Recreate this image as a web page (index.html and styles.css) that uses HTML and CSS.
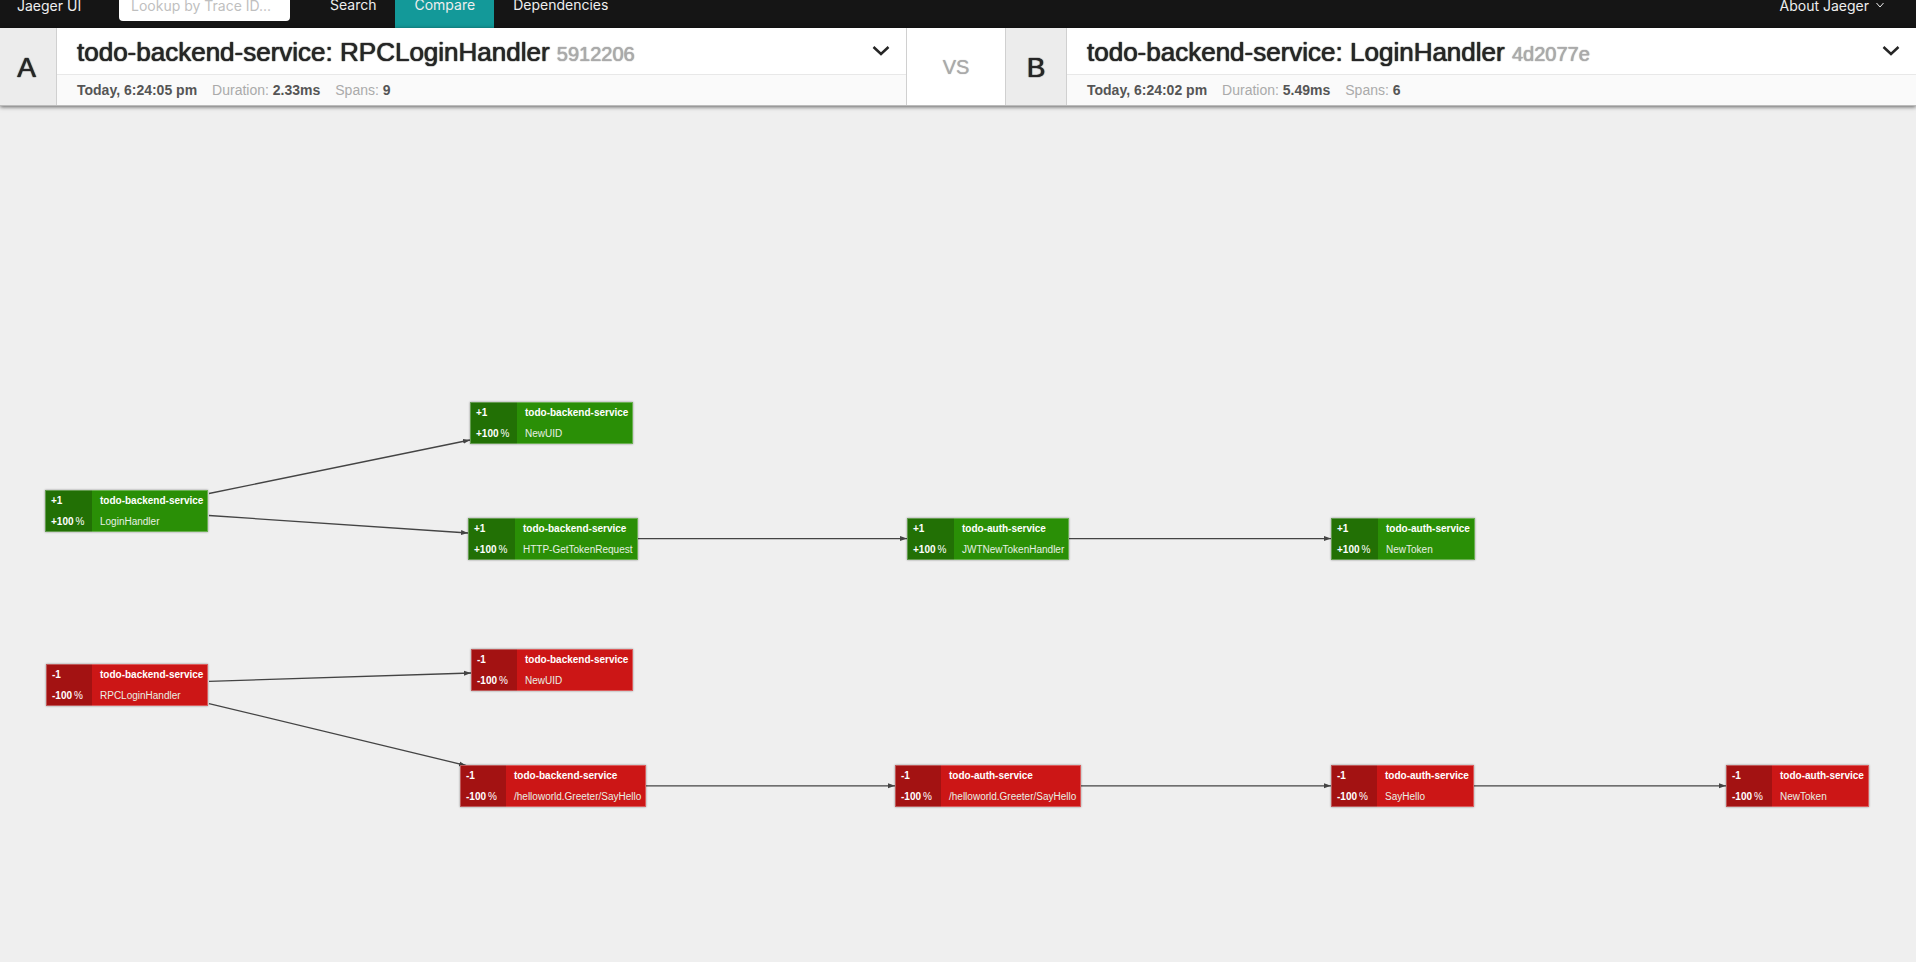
FILE: index.html
```html
<!DOCTYPE html>
<html lang="en">
<head>
<meta charset="utf-8">
<title>Jaeger UI</title>
<link rel="stylesheet" href="styles.css">
</head>
<body>
<nav class="nav">
  <div class="nav-inner">
    <a class="nav-brand" href="#">Jaeger UI</a>
    <input class="nav-lookup" type="text" placeholder="Lookup by Trace ID..." aria-label="Lookup by Trace ID">
    <a class="nav-item" href="#">Search</a>
    <a class="nav-item nav-item-active" href="#">Compare</a>
    <a class="nav-item" href="#">Dependencies</a>
    <button class="nav-about" type="button">About Jaeger
      <svg width="10" height="8" viewBox="0 0 10 8"><path d="M1.5 2L5 6L8.500 2" fill="none" stroke="currentColor"/></svg>
    </button>
  </div>
</nav>
<header class="header">
  <div class="label label-a">A</div>
  <section class="trace">
    <div class="trace-head">
      <h1 class="trace-title">todo-backend-service: RPCLoginHandler <small class="trace-id">5912206</small></h1>
      <button class="toggle" type="button" aria-label="Choose trace A"><svg width="18" height="12" viewBox="0 0 18 12"><path d="M1.500 2L9 9L16.500 2" fill="none" stroke="currentColor" stroke-width="2.500"/></svg></button>
    </div>
    <div class="trace-meta"><b>Today, 6:24:05 pm</b><span>Duration: <b>2.33ms</b></span><span>Spans: <b>9</b></span></div>
  </section>
  <div class="vs">VS</div>
  <div class="label">B</div>
  <section class="trace">
    <div class="trace-head">
      <h1 class="trace-title">todo-backend-service: LoginHandler <small class="trace-id">4d2077e</small></h1>
      <button class="toggle" type="button" aria-label="Choose trace B"><svg width="18" height="12" viewBox="0 0 18 12"><path d="M1.500 2L9 9L16.500 2" fill="none" stroke="currentColor" stroke-width="2.500"/></svg></button>
    </div>
    <div class="trace-meta"><b>Today, 6:24:02 pm</b><span>Duration: <b>5.49ms</b></span><span>Spans: <b>6</b></span></div>
  </section>
</header>
<main class="graph">
  <svg class="edges" width="1916" height="856" viewBox="0 0 1916 856">
    <defs><marker id="arrow" markerUnits="userSpaceOnUse" markerWidth="8" markerHeight="6" refX="7" refY="3" orient="auto"><path d="M0 0.500L7 3L0 5.500Z" fill="#444"/></marker></defs>
    <g fill="none" stroke="#444" stroke-width="1.300">
      <path d="M209 387.500L470 334" marker-end="url(#arrow)"/>
      <path d="M209 409.500L468 427" marker-end="url(#arrow)"/>
      <path d="M636 432.600H907" marker-end="url(#arrow)"/>
      <path d="M1068 432.600H1331" marker-end="url(#arrow)"/>
      <path d="M209 575.300L471 567" marker-end="url(#arrow)"/>
      <path d="M209 597.600L466 659.500" marker-end="url(#arrow)"/>
      <path d="M645 679.800H895" marker-end="url(#arrow)"/>
      <path d="M1080 679.800H1331" marker-end="url(#arrow)"/>
      <path d="M1474 679.800H1726" marker-end="url(#arrow)"/>
    </g>
  </svg>
  <div class="node added n1"><div class="metric"><b>+1</b><b>+100<i>%</i></b></div><div class="op"><b>todo-backend-service</b><span>LoginHandler</span></div></div>
  <div class="node added n2"><div class="metric"><b>+1</b><b>+100<i>%</i></b></div><div class="op"><b>todo-backend-service</b><span>NewUID</span></div></div>
  <div class="node added n3"><div class="metric"><b>+1</b><b>+100<i>%</i></b></div><div class="op"><b>todo-backend-service</b><span>HTTP-GetTokenRequest</span></div></div>
  <div class="node added n4"><div class="metric"><b>+1</b><b>+100<i>%</i></b></div><div class="op"><b>todo-auth-service</b><span>JWTNewTokenHandler</span></div></div>
  <div class="node added n5"><div class="metric"><b>+1</b><b>+100<i>%</i></b></div><div class="op"><b>todo-auth-service</b><span>NewToken</span></div></div>
  <div class="node removed n6"><div class="metric"><b>-1</b><b>-100<i>%</i></b></div><div class="op"><b>todo-backend-service</b><span>RPCLoginHandler</span></div></div>
  <div class="node removed n7"><div class="metric"><b>-1</b><b>-100<i>%</i></b></div><div class="op"><b>todo-backend-service</b><span>NewUID</span></div></div>
  <div class="node removed n8"><div class="metric"><b>-1</b><b>-100<i>%</i></b></div><div class="op"><b>todo-backend-service</b><span>/helloworld.Greeter/SayHello</span></div></div>
  <div class="node removed n9"><div class="metric"><b>-1</b><b>-100<i>%</i></b></div><div class="op"><b>todo-auth-service</b><span>/helloworld.Greeter/SayHello</span></div></div>
  <div class="node removed n10"><div class="metric"><b>-1</b><b>-100<i>%</i></b></div><div class="op"><b>todo-auth-service</b><span>SayHello</span></div></div>
  <div class="node removed n11"><div class="metric"><b>-1</b><b>-100<i>%</i></b></div><div class="op"><b>todo-auth-service</b><span>NewToken</span></div></div>
</main>
</body>
</html>
```
FILE: styles.css
```css
* { box-sizing: border-box; }
body {
  margin: 0;
  min-height: 100vh;
  display: flex;
  flex-direction: column;
  background: #efefef;
  color: #262626;
  font-family: "Liberation Sans", Arial, sans-serif;
  font-size: 14px;
}
button { border: 0; padding: 0; background: none; color: inherit; font: inherit; }

/* The bar is partly scrolled out of view: only its lower part shows. */
.nav {
  height: 28px;
  display: flex;
  align-items: flex-end;
  overflow: hidden;
  background: #151515;
  font-family: Inter, sans-serif;
}
.nav-inner {
  flex: 1;
  height: 46px;
  display: flex;
  align-items: center;
  padding: 0 31px 0 17px;
  color: #eee;
}
.nav a { color: #eee; text-decoration: none; }
.nav-brand { width: 102px; }
.nav-lookup {
  width: 171px;
  height: 32px;
  margin-right: 21px;
  padding: 0 12px;
  border: 0;
  border-radius: 4px;
  background: #fff;
  font: inherit;
}
.nav-lookup::placeholder { color: #bfbfbf; }
.nav-item { padding: 0 19px; line-height: 46px; }
.nav-item-active { background: #139999; }
.nav-about { display: flex; align-items: center; gap: 6px; margin-left: auto; }

.header {
  position: relative;
  display: flex;
  height: 78px;
  border-bottom: 1px solid #bbb;
  background: #fff;
  box-shadow: 0 1px 4px rgba(0, 0, 0, 0.6);
}
.label, .vs {
  display: flex;
  align-items: center;
  justify-content: center;
  padding-top: 2px;
  border-right: 1px solid #d0d0d0;
}
.label { width: 61px; background: #ececec; font-size: 28px; text-shadow: 0 0 1px, 0 0 1px; }
.label-a { width: 57px; padding-right: 3px; }
.vs {
  width: 100px;
  border-left: 1px solid #d0d0d0;
  color: #aaa;
  font-size: 20px;
  text-shadow: 0 0 1px;
}
.trace { flex: 1; display: flex; flex-direction: column; }
.trace-head {
  height: 47px;
  display: flex;
  align-items: center;
  justify-content: space-between;
  padding: 0 16px 0 20px;
  border-bottom: 1px solid #e8e8e8;
}
.trace-title { margin: 0; padding-top: 2px; font-size: 26px; font-weight: 400; text-shadow: 0 0 1px, 0 0 1px; }
.trace-id { color: #aaa; font-size: 20px; }
.toggle { display: flex; }
.trace-meta {
  flex: 1;
  display: flex;
  align-items: center;
  gap: 15px;
  padding-left: 20px;
  background: #fafafa;
  color: #aaa;
}
.trace-meta b { color: #555; }

.graph { position: relative; flex: 1; overflow: hidden; }
.edges { position: absolute; top: 0; left: 0; }
.node {
  position: absolute;
  display: flex;
  height: 42px;
  color: #fff;
  font-size: 10px;
  line-height: 20px;
  white-space: nowrap;
  box-shadow: 0 0 2px rgba(0, 0, 0, 0.4);
}
.metric, .op { display: flex; flex-direction: column; gap: 1px; border: 1px solid rgba(255, 255, 255, 0.3); }
.metric { padding-left: 5px; border-right: 0; }
.metric i { margin-left: 2px; font-style: normal; font-weight: 400; }
.op { padding: 0 4px 0 8px; border-left: 0; }
.op span { color: #e8f0e4; }
.added { background: #2a8f06; }
.added .metric { width: 47px; background: #227005; }
.removed { background: #cc1616; }
.removed .metric { width: 46px; background: #a31212; }
.n1 { left: 45px; top: 384px; }
.n2 { left: 470px; top: 296px; }
.n3 { left: 468px; top: 412px; }
.n4 { left: 907px; top: 412px; }
.n5 { left: 1331px; top: 412px; }
.n6 { left: 46px; top: 558px; }
.n7 { left: 471px; top: 543px; }
.n8 { left: 460px; top: 659px; }
.n9 { left: 895px; top: 659px; }
.n10 { left: 1331px; top: 659px; }
.n11 { left: 1726px; top: 659px; }
```
